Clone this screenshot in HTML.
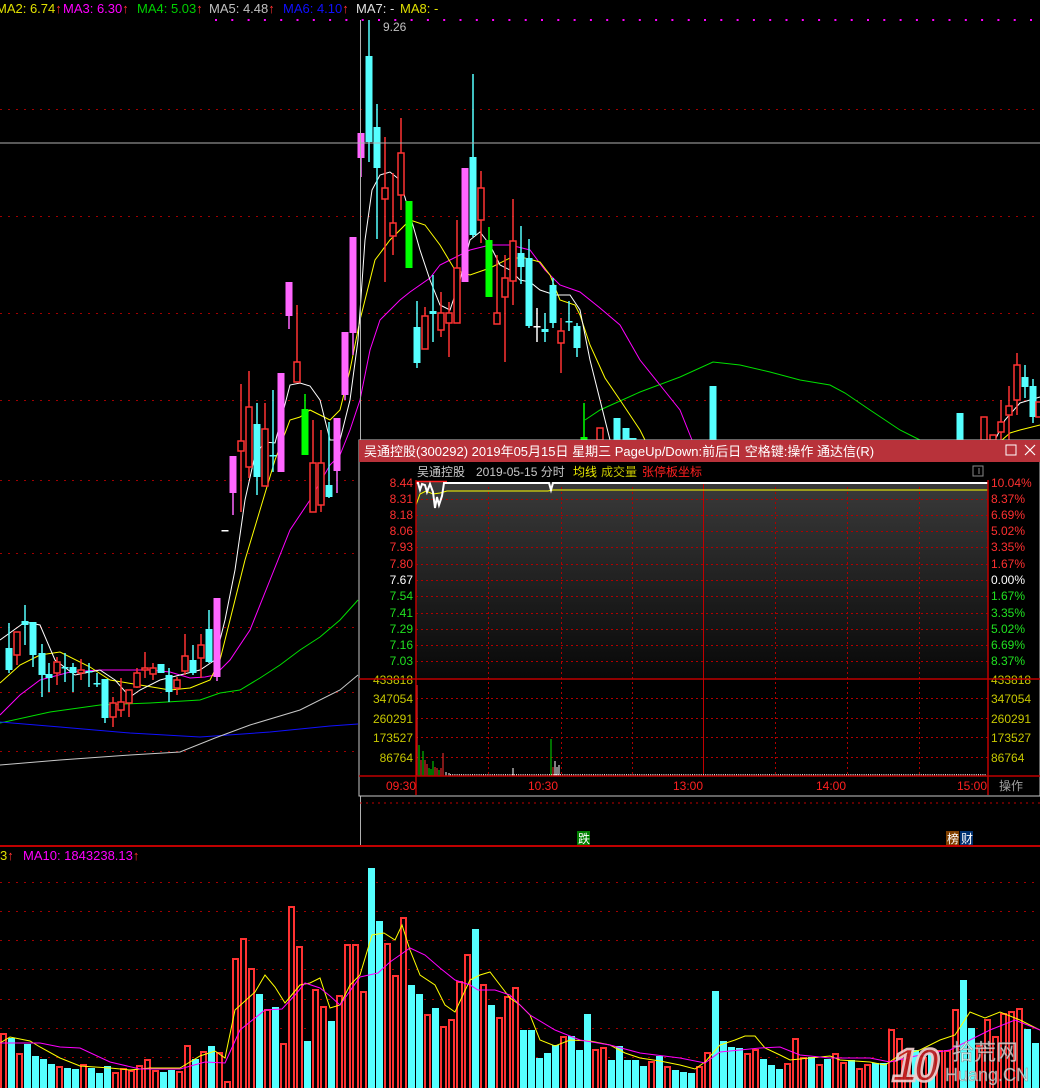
<!DOCTYPE html>
<html><head><meta charset="utf-8"><style>
html,body{margin:0;padding:0;background:#000;width:1040px;height:1088px;overflow:hidden}
svg{display:block}
text{font-family:"Liberation Sans","Noto Sans CJK SC",sans-serif}
</style></head><body>
<svg id="s" width="1040" height="1088" xmlns="http://www.w3.org/2000/svg">
<defs>
<linearGradient id="g" x1="0" y1="0" x2="0" y2="1"><stop offset="0" stop-color="#3a3a3a"/><stop offset="1" stop-color="#080808"/></linearGradient>
</defs>
<g id="grid"></g>
<g id="lines"></g>
<g id="cand"></g>
<g id="vol"></g>
<g id="vlines"></g>
<line x1="0" y1="143" x2="1040" y2="143" stroke="#b0b0b0" stroke-width="1"/>
<line x1="360.5" y1="20" x2="360.5" y2="846" stroke="#b0b0b0" stroke-width="1"/>
<line x1="0" y1="846" x2="1040" y2="846" stroke="#c00000" stroke-width="2"/>
<text y="13" font-size="13">
<tspan x="-4" fill="#e0e000">MA2: 6.74</tspan><tspan fill="#ff3030">↑</tspan>
<tspan x="63" fill="#ff00ff">MA3: 6.30</tspan><tspan fill="#ff3030">↑</tspan>
<tspan x="137" fill="#00d000">MA4: 5.03</tspan><tspan fill="#ff3030">↑</tspan>
<tspan x="209" fill="#c0c0c0">MA5: 4.48</tspan><tspan fill="#ff3030">↑</tspan>
<tspan x="283" fill="#1010ff">MA6: 4.10</tspan><tspan fill="#ff3030">↑</tspan>
<tspan x="356" fill="#e0e0e0">MA7: -</tspan>
<tspan x="400" fill="#e0e000">MA8: -</tspan>
</text>
<text x="383" y="31" font-size="12" fill="#c0c0c0">9.26</text>
<text y="860" font-size="13"><tspan x="0" fill="#e0e000">3</tspan><tspan fill="#ff3030">↑</tspan><tspan x="23" fill="#ff00ff">MA10: 1843238.13</tspan><tspan fill="#ff3030">↑</tspan></text>
<line x1="360" y1="803" x2="1040" y2="803" stroke="#c00000" stroke-dasharray="2,4"/>
<rect x="577" y="831" width="13" height="14" fill="#008000"/><text x="578" y="843" font-size="12" fill="#fff">跌</text>
<rect x="946" y="831" width="13" height="14" fill="#804000"/><text x="947" y="843" font-size="12" fill="#fff">榜</text>
<rect x="960" y="831" width="13" height="14" fill="#003070"/><text x="961" y="843" font-size="12" fill="#fff">财</text>
<g>
<rect x="359" y="440" width="681" height="356" fill="#000" stroke="#c8c8c8" stroke-width="1"/>
<rect x="359" y="440" width="681" height="22" fill="#b8323a"/>
<text x="364" y="456" font-size="13" fill="#fff">吴通控股(300292) 2019年05月15日 星期三 PageUp/Down:前后日 空格键:操作 通达信(R)</text>
<rect x="1006" y="445" width="10" height="10" fill="none" stroke="#fff" stroke-width="1"/>
<path d="M1025 445 L1035 455 M1035 445 L1025 455" stroke="#fff" stroke-width="1.2"/>
<text y="476" font-size="12"><tspan x="417" fill="#c8c8c8">吴通控股</tspan><tspan x="476" fill="#c8c8c8">2019-05-15 分时</tspan><tspan x="573" fill="#e8e800">均线</tspan><tspan x="601" fill="#c8c800">成交量</tspan><tspan x="642" fill="#ff2020">张停板坐标</tspan></text>
<rect x="973" y="466" width="10" height="10" fill="none" stroke="#888" stroke-width="1"/><line x1="979" y1="468" x2="979" y2="474" stroke="#888"/>
<rect x="416" y="482" width="572" height="196" fill="url(#g)"/>
<g id="pop"></g>
<line x1="416" y1="480" x2="416" y2="795" stroke="#c00000" stroke-width="1.5"/>
<line x1="988" y1="480" x2="988" y2="795" stroke="#c00000" stroke-width="1.5"/>
<line x1="359" y1="679" x2="1040" y2="679" stroke="#c00000" stroke-width="1.5"/>
<line x1="359" y1="776" x2="1040" y2="776" stroke="#c00000" stroke-width="1.5"/>
<text y="790" font-size="12" fill="#ff2020"><tspan x="386">09:30</tspan><tspan x="528">10:30</tspan><tspan x="673">13:00</tspan><tspan x="816">14:00</tspan><tspan x="957">15:00</tspan></text>
<text x="999" y="790" font-size="12" fill="#a0a0a0">操作</text>
</g>
<g opacity="0.92">
<text x="892" y="1081" font-size="46" font-weight="bold" fill="#c02020" stroke="#f0d0d0" stroke-width="2.5" font-style="italic" letter-spacing="-4">10</text>
<text x="952" y="1060" font-size="22" fill="#f0f0f0" fill-opacity="0.85" stroke="#888" stroke-width="0.5">拾荒网</text>
<text x="945" y="1081" font-size="18" fill="#f0f0f0" fill-opacity="0.85" stroke="#888" stroke-width="0.5">Huang.CN</text>
</g>
</svg>
<script>
var NS="http://www.w3.org/2000/svg";
function el(p,t,a){var e=document.createElementNS(NS,t);for(var k in a)e.setAttribute(k,a[k]);document.getElementById(p).appendChild(e);return e;}
[109,216,313,400,480,553,627,692,751].forEach(function(y){el('grid','line',{x1:0,x2:1040,y1:y+.5,y2:y+.5,stroke:'#a00000','stroke-dasharray':'2,6'});});
for(var x=215;x<1040;x+=16.3){el('grid','rect',{x:x,y:19,width:2,height:2,fill:'#ff00ff'});}
[882,911,940,969,999,1028,1057].forEach(function(y){el('grid','line',{x1:0,x2:1040,y1:y+.5,y2:y+.5,stroke:'#a00000','stroke-dasharray':'2,6'});});
function pl(g,pts,c,w){el(g,'polyline',{points:pts,fill:'none',stroke:c,'stroke-width':w||1});}
pl('lines','0,723 50,712 100,705 150,703 200,700 220,693 240,690 260,678 280,665 300,650 320,637 340,620 358,600','#00e000');
pl('lines','585,420 600,410 640,392 680,377 713,362 740,365 770,372 800,380 830,385 845,393 870,410 900,430 920,440','#00e000');
pl('lines','0,722 60,727 130,733 200,737 270,732 330,726 358,724','#1010ff');
pl('lines','0,765 60,760 130,755 180,752 215,738 250,725 300,710 340,690 358,675','#c8c8c8');
pl('lines','0,715 20,695 40,680 70,672 100,670 150,670 170,672 190,678 205,677 215,675 230,660 250,630 270,580 290,530 310,500 330,465 340,455 350,430 360,400 370,350 380,320 400,300 410,292 430,278 440,265 450,260 470,250 490,245 510,245 530,250 545,270 560,285 580,292 600,308 620,325 640,360 660,385 680,410 692,440','#ff00ff');
pl('lines','0,683 20,665 40,655 60,652 90,667 110,680 140,685 170,690 190,688 210,680 220,660 230,620 245,560 260,510 275,460 290,420 300,417 310,410 320,415 330,420 340,410 350,370 360,320 375,260 390,240 410,220 425,225 440,245 455,270 470,275 490,268 510,258 525,258 540,262 550,275 560,300 575,305 580,315 590,345 605,378 620,400 640,430 645,440','#ffff00');
pl('lines','1002,440 1010,433 1020,430 1040,425','#ffff00');
pl('lines','0,640 25,622 40,625 55,660 75,675 100,670 115,680 130,697 140,690 160,680 180,675 200,670 215,660 225,620 235,570 245,500 255,455 265,442 275,443 290,385 300,383 310,386 320,400 330,440 340,440 350,400 358,340 365,240 372,190 380,175 390,172 400,180 410,215 420,250 430,280 440,305 450,310 460,280 470,240 480,232 490,245 500,265 510,270 520,280 530,282 540,290 555,295 570,295 580,310 590,360 600,400 610,440','#ffffff');
pl('lines','995,440 1005,420 1020,403 1040,397','#ffffff');
var C=[[9,'c',648,670,623,673],[17,'r',632,655,632,665],[25,'c',621,625,605,645],[33,'c',622,655,622,667],[42,'c',653,675,644,697],[49,'c',674,678,663,692],[57,'r',662,673,657,685],[65,'c',667,668,653,682],[73,'c',667,673,663,692],[81,'r',670,673,659,680],[89,'c',671,672,663,687],[97,'c',683,684,673,687],[105,'c',679,718,679,723],[113,'r',703,717,697,727],[121,'r',702,710,678,717],[129,'r',690,703,690,717],[137,'r',673,687,668,688],[145,'r',668,670,652,678],[153,'r',668,674,663,680],[161,'c',664,673,664,673],[169,'c',675,692,668,702],[177,'r',680,688,677,695],[185,'r',656,671,634,675],[193,'c',660,673,645,675],[201,'r',645,658,634,678],[209,'c',629,662,610,663],[217,'p',598,677,598,681],[225,'w',530,531,530,531],[233,'p',456,493,456,515],[241,'r',441,451,384,512],[249,'r',407,467,371,478],[257,'c',424,477,403,495],[265,'r',429,486,403,486],[273,'c',455,456,390,472],[281,'p',373,472,373,472],[289,'p',282,316,282,329],[297,'r',362,382,305,382],[305,'g',409,455,394,455],[313,'r',463,512,420,512],[321,'r',463,505,430,512],[329,'c',485,497,422,498],[337,'p',418,471,418,493],[345,'p',332,395,332,400],[353,'p',237,333,237,355],[361,'p',133,158,133,177],[369,'c',56,142,20,162],[377,'c',127,168,104,239],[385,'r',188,199,137,282],[393,'r',223,236,173,255],[401,'r',153,195,118,210],[409,'g',201,268,201,268],[417,'c',327,363,301,368],[425,'r',316,349,307,349],[433,'c',311,314,275,342],[441,'r',313,330,292,337],[449,'r',313,323,302,357],[457,'r',268,323,220,323],[465,'p',168,282,168,282],[473,'c',157,235,74,237],[481,'r',188,220,171,243],[489,'g',240,297,227,297],[497,'r',313,324,255,324],[505,'r',278,297,255,362],[513,'r',241,281,199,305],[521,'c',253,267,226,284],[529,'c',258,326,239,328],[537,'w',326,327,308,342],[545,'c',329,332,313,342],[553,'c',285,323,278,328],[561,'r',331,343,318,373],[569,'c',321,322,301,331],[577,'c',326,348,323,357],
[584,'g',437,440,403,440],[600,'r',428,440,428,440],[617,'c',418,440,418,440],[626,'c',428,440,428,440],[633,'c',438,440,438,440],[713,'c',386,440,386,440],[960,'c',413,440,413,440],[984,'r',417,440,417,440],[993,'r',435,440,435,440],[1001,'r',422,432,400,440],[1009,'r',406,415,386,440],[1017,'r',365,400,353,415],[1025,'c',377,387,365,398],[1033,'c',386,417,379,423],[1039,'r',402,417,402,417]];
var col={r:'#ff3232',p:'#ff66ff',c:'#55ffff',g:'#00ff00',w:'#ffffff'};
C.forEach(function(d){var x=d[0],c=col[d[1]];
 el('cand','line',{x1:x,x2:x,y1:d[4],y2:d[5],stroke:c,'stroke-width':1.5});
 var h=Math.max(d[3]-d[2],1.5);
 if(d[1]=='r') el('cand','rect',{x:x-3,y:d[2],width:6,height:h,fill:'#000',stroke:c,'stroke-width':1.5});
 else if(d[1]=='w') el('cand','rect',{x:x-3.5,y:d[2],width:7,height:1.5,fill:c});
 else el('cand','rect',{x:x-3.5,y:d[2],width:7,height:h,fill:c});
});
var V=[['r',1033],['c',1038],['r',1053],['c',1044],['c',1056],['c',1059],['c',1064],['r',1066],['c',1068],['c',1069],['r',1064],['c',1068],['c',1073],['c',1066],['r',1072],['r',1068],['r',1070],['r',1065],['r',1059],['r',1070],['c',1072],['c',1070],['r',1071],['r',1045],['c',1059],['r',1051],['c',1046],['r',1052],['r',1081],['r',958],['r',938],['r',968],['c',994],['r',1009],['c',1007],['r',1043],['r',906],['r',946],['c',1041],['r',989],['r',1006],['c',1021],['r',995],
['r',944],['r',944],['r',991],['c',868],['c',921],['r',943],['r',975],['r',917],['c',985],['c',994],['r',1014],['c',1008],['r',1026],['r',1019],['r',981],['r',954],['c',929],['r',984],['c',1005],['r',1017],['r',996],['r',987],['c',1030],['c',1030],['c',1058],['c',1053],['c',1045],['r',1036],['c',1036],['c',1050],['c',1014],['r',1049],['r',1047],['c',1060],['c',1046],['c',1060],['c',1060],['c',1066],['r',1061],['c',1056],['r',1066],['c',1070],['c',1072],['c',1073],['r',1066],['r',1052],['c',991],['c',1041],['c',1047],['c',1048],['r',1053],['r',1049],['c',1059],['c',1065],['c',1069],['r',1063],['r',1038],['r',1057],['c',1057],['r',1064],['c',1059],['r',1053],['r',1062],['c',1060],['r',1068],['r',1064],['c',1063],['c',1063],['r',1029],['r',1038],['r',1050],['c',1050],['r',1057],['c',1050],['r',1050],['r',1050],['r',1009],['c',980],['c',1028],['r',1045],['r',1019],['r',1036],['r',1013],['r',1011],['r',1008],['c',1029],['c',1043],['r',1051]];
V.forEach(function(d,i){var x=i<43?i*8:344+(i-43)*8;
 if(d[0]=='c') el('vol','rect',{x:x,y:d[1],width:7,height:1088-d[1],fill:'#55ffff'});
 else el('vol','rect',{x:x+1,y:d[1]+1,width:5,height:1090-d[1],fill:'none',stroke:'#ff3232','stroke-width':2});
});
pl('vlines','0,1043 10,1037 30,1041 40,1047 60,1058 80,1066 110,1068 130,1070 150,1068 180,1068 200,1056 215,1051 225,1058 235,1010 255,992 265,975 275,987 285,1003 300,985 310,983 320,978 330,1008 340,1005 350,985 360,975 372,935 384,933 395,940 402,925 410,950 420,975 435,985 445,1005 455,1012 470,980 480,975 490,972 500,985 510,998 520,1005 530,1015 540,1040 555,1046 570,1040 590,1041 610,1045 625,1053 640,1058 660,1061 680,1065 695,1069 705,1062 720,1045 735,1040 745,1036 755,1036 765,1048 780,1055 790,1060 810,1058 830,1056 840,1060 870,1062 885,1065 900,1055 920,1050 940,1040 955,1035 970,1012 985,1018 1000,1012 1020,1020 1040,1030','#ffff00');
pl('vlines','0,1043 40,1043 60,1047 80,1048 110,1062 140,1069 180,1069 205,1062 225,1063 240,1030 265,1010 282,1009 295,995 305,983 320,988 330,996 340,1005 360,977 378,973 390,962 400,955 410,948 425,955 440,968 455,980 470,985 478,990 495,990 510,995 530,1015 555,1030 580,1040 610,1045 640,1053 680,1058 705,1063 720,1052 760,1048 780,1047 800,1055 830,1058 870,1058 890,1062 920,1055 950,1050 970,1040 990,1030 1015,1020 1040,1030','#ff00ff');
var ys=[483,499,515,531,547,564,580,596,613,629,645,661];
var lp=['8.44','8.31','8.18','8.06','7.93','7.80','7.67','7.54','7.41','7.29','7.16','7.03'];
var rp=['10.04%','8.37%','6.69%','5.02%','3.35%','1.67%','0.00%','1.67%','3.35%','5.02%','6.69%','8.37%'];
ys.forEach(function(y,i){
 if(i>0) el('pop','line',{x1:416,x2:988,y1:y+.5,y2:y+.5,stroke:'#b00000','stroke-dasharray':'2,3'});
 var c=i<6?'#ff3030':(i==6?'#ffffff':'#20e020');
 var t=el('pop','text',{x:413,y:y+4,'font-size':12,fill:c,'text-anchor':'end'});t.textContent=lp[i];
 var t2=el('pop','text',{x:991,y:y+4,'font-size':12,fill:c});t2.textContent=rp[i];
});
[698,718,737,757].forEach(function(y){el('pop','line',{x1:416,x2:988,y1:y+.5,y2:y+.5,stroke:'#b00000','stroke-dasharray':'2,3'});});
[[679,'433818'],[698,'347054'],[718,'260291'],[737,'173527'],[757,'86764']].forEach(function(d){
 var t=el('pop','text',{x:413,y:d[0]+5,'font-size':12,fill:'#c8c800','text-anchor':'end'});t.textContent=d[1];
 var t2=el('pop','text',{x:991,y:d[0]+5,'font-size':12,fill:'#c8c800'});t2.textContent=d[1];});
[488,561,632,775,847,919].forEach(function(x){el('pop','line',{x1:x+.5,x2:x+.5,y1:482,y2:776,stroke:'#b00000','stroke-dasharray':'2,3'});});
el('pop','line',{x1:703.5,x2:703.5,y1:482,y2:776,stroke:'#c00000','stroke-width':1});
el('pop','line',{x1:416,x2:447,y1:481.5,y2:481.5,stroke:'#ff2020','stroke-width':1.5});
pl('pop','416,505 420,494 426,491 433,494 440,493 447,491 455,491 548,491 553,490 988,490','#ffff00');
pl('pop','416,483 418,483 420,490 422,484 425,485 427,492 430,484 433,492 435,508 437,497 439,505 442,496 444,483 549,483 551,490 553,483 988,483','#ffffff',2);
var pv=[[417,685,'#ff3030'],[419,745,'#00e000'],[421,760,'#ff3030'],[423,751,'#00e000'],[425,760,'#ff3030'],[427,764,'#ff3030'],[429,768,'#00e000'],[431,769,'#00e000'],[433,761,'#00e000'],[435,767,'#ff3030'],[437,768,'#ff3030'],[439,770,'#00e000'],[441,768,'#ff3030'],[443,753,'#ff3030'],[446,772,'#fff'],[449,773,'#fff'],[513,768,'#fff'],[551,739,'#00e000'],[553,767,'#ff3030'],[555,761,'#fff'],[557,767,'#fff'],[559,765,'#fff']];
pv.forEach(function(d){el('pop','line',{x1:d[0],x2:d[0],y1:d[1],y2:776,stroke:d[2],'stroke-width':1});});
for(var x=450;x<985;x+=2.2){el('pop','rect',{x:x,y:774,width:1,height:1.5,fill:'#ddd'});}
</script>
</body></html>
